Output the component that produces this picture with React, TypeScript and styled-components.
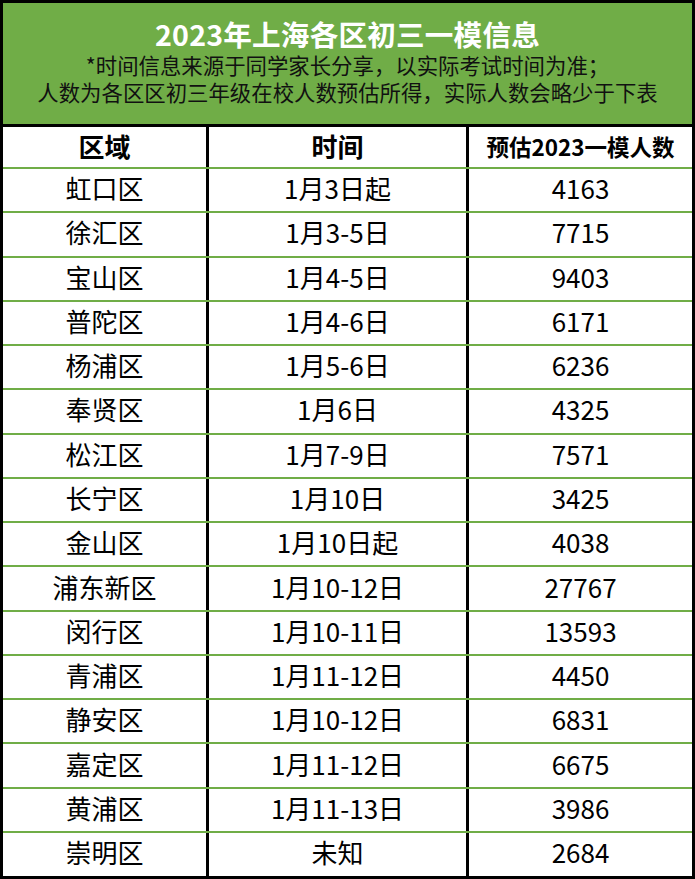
import React from "react";
import styled, { createGlobalStyle } from "styled-components";

const Global = createGlobalStyle`
  html, body { margin: 0; padding: 0; background: #fff; }
  body { font-family: "Noto Sans CJK SC", "Noto Sans", sans-serif; }
`;

const GREEN = "#70ad47";
const COLS = "203px 260px 1fr";

const Frame = styled.div`
  width: 695px;
  height: 879px;
  box-sizing: border-box;
  border: 3px solid #000;
  display: flex;
  flex-direction: column;
`;

const Banner = styled.div`
  height: 124px;
  box-sizing: border-box;
  border-bottom: 3px solid #000;
  background: ${GREEN};
  display: flex;
  flex-direction: column;
  align-items: center;
  padding-top: 14px;
`;

const Title = styled.div`
  color: #fff;
  font-weight: 700;
  font-size: 28.6px;
  line-height: 34px;
  letter-spacing: 0.2px;
  white-space: nowrap;
`;

const Note = styled.div`
  color: #111;
  font-size: 21.4px;
  line-height: 27px;
  white-space: nowrap;
`;

const Table = styled.div`
  flex: 1;
  display: flex;
  flex-direction: column;
`;

const Row = styled.div<{ $head?: boolean; $last?: boolean }>`
  display: grid;
  grid-template-columns: ${COLS};
  box-sizing: border-box;
  height: ${(p) => (p.$head ? "40px" : "44.27px")};
  border-top: ${(p) => (p.$head ? "none" : `2px solid ${GREEN}`)};
  ${(p) => (p.$last ? "flex: 1;" : "")}
`;

const Cell = styled.div<{ $divider?: boolean; $head?: boolean; $small?: boolean }>`
  box-sizing: border-box;
  border-left: ${(p) => (p.$divider ? "3px solid #000" : "none")};
  display: flex;
  align-items: center;
  justify-content: center;
  color: #000;
  font-weight: ${(p) => (p.$head ? 700 : 400)};
  font-size: ${(p) => (p.$small ? "22.5px" : "26px")};
  line-height: 1;
  padding-bottom: ${(p) => (p.$head ? "2px" : "4px")};
  white-space: nowrap;
`;

const rows: [string, string, string][] = [
  ["虹口区", "1月3日起", "4163"],
  ["徐汇区", "1月3-5日", "7715"],
  ["宝山区", "1月4-5日", "9403"],
  ["普陀区", "1月4-6日", "6171"],
  ["杨浦区", "1月5-6日", "6236"],
  ["奉贤区", "1月6日", "4325"],
  ["松江区", "1月7-9日", "7571"],
  ["长宁区", "1月10日", "3425"],
  ["金山区", "1月10日起", "4038"],
  ["浦东新区", "1月10-12日", "27767"],
  ["闵行区", "1月10-11日", "13593"],
  ["青浦区", "1月11-12日", "4450"],
  ["静安区", "1月10-12日", "6831"],
  ["嘉定区", "1月11-12日", "6675"],
  ["黄浦区", "1月11-13日", "3986"],
  ["崇明区", "未知", "2684"],
];

export default function App() {
  return (
    <>
      <Global />
      <Frame>
        <Banner>
          <Title>2023年上海各区初三一模信息</Title>
          <Note>*时间信息来源于同学家长分享，以实际考试时间为准；</Note>
          <Note>人数为各区区初三年级在校人数预估所得，实际人数会略少于下表</Note>
        </Banner>
        <Table>
          <Row $head>
            <Cell $head>区域</Cell>
            <Cell $head $divider>时间</Cell>
            <Cell $head $divider $small>预估2023一模人数</Cell>
          </Row>
          {rows.map(([a, b, c], i) => (
            <Row key={a} $last={i === rows.length - 1}>
              <Cell>{a}</Cell>
              <Cell $divider>{b}</Cell>
              <Cell $divider>{c}</Cell>
            </Row>
          ))}
        </Table>
      </Frame>
    </>
  );
}
